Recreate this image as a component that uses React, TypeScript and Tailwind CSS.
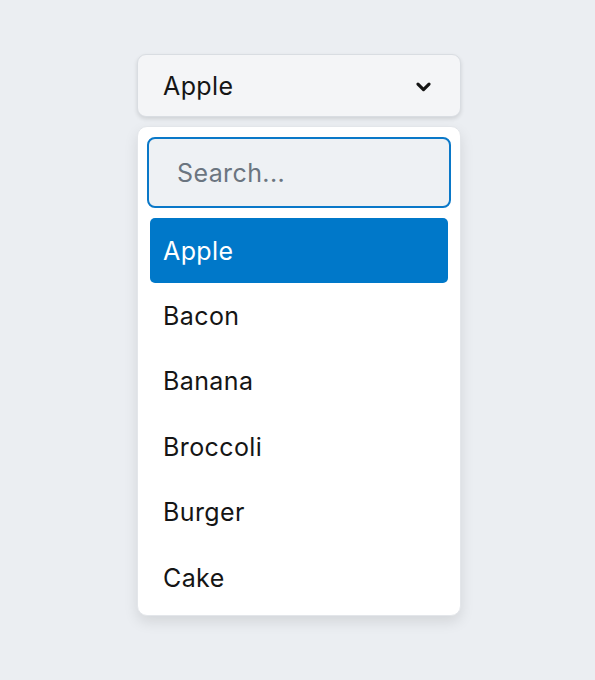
import React from "react";

const items = ["Apple", "Bacon", "Banana", "Broccoli", "Burger", "Cake"];

export default function App() {
  return (
    <div
      className="min-h-[680px] w-full bg-[#ebeef2] flex flex-col items-center pt-[54px] pl-[3px]"
      style={{ fontFamily: "Inter, 'Noto Sans', sans-serif" }}
    >
      <div className="w-[324px] flex flex-col gap-[9px]">
        <button className="h-[63px] w-full rounded-[9px] border border-[#d9dde2] bg-[#f4f5f7] shadow-[0_2px_4px_rgba(0,0,0,0.12)] flex items-center justify-between pl-[25px] pr-[27px] pt-[2px] text-[25px] tracking-[0.4px] text-[#151515]">
          <span>Apple</span>
          <svg width="19" height="19" viewBox="0 0 24 24" fill="none" stroke="#151515" strokeWidth="4" strokeLinecap="round" strokeLinejoin="round">
            <path d="M5 9l7 7 7-7" />
          </svg>
        </button>
        <div className="w-full rounded-[10px] bg-white border border-[#e3e6ea] shadow-[0_6px_14px_rgba(0,0,0,0.10)] pt-[10px] pb-[5px] px-[9px] flex flex-col">
          <div className="h-[71px] rounded-[8px] border-2 border-[#0a78c8] bg-[#eef1f4] flex items-center pl-[28px] pt-[2px] text-[25px] tracking-[0.4px] text-[#6b7580]">
            Search...
          </div>
          <div className="flex flex-col mt-[10px] px-[3px]">
            {items.map((it, i) => (
              <div
                key={it}
                className={
                  i === 0
                    ? "h-[65px] rounded-[5px] bg-[#0078c9] text-white flex items-center pl-[13px] pt-[2px] text-[25px] tracking-[0.4px]"
                    : "h-[65.4px] flex items-center pl-[13px] pt-[2px] text-[25px] tracking-[0.4px] text-[#151515]"
                }
              >
                {it}
              </div>
            ))}
          </div>
        </div>
      </div>
    </div>
  );
}
